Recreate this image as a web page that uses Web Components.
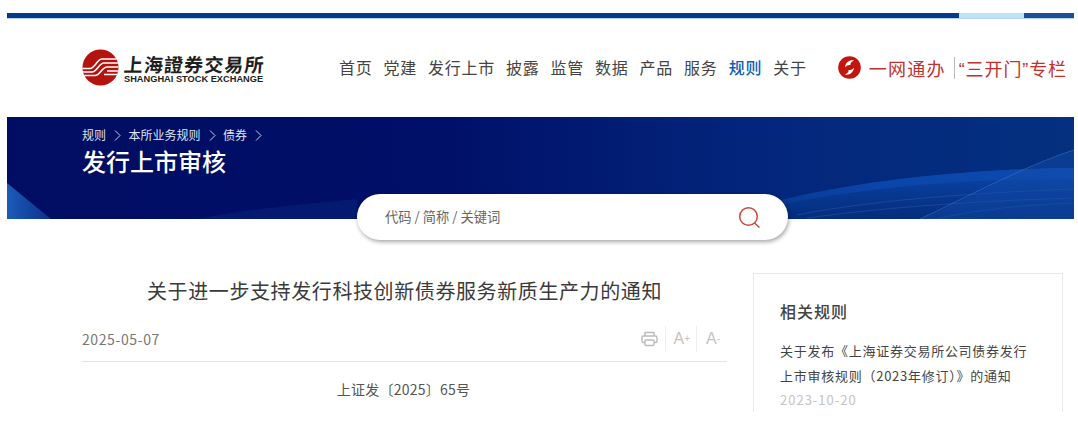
<!DOCTYPE html>
<html lang="zh"><head><meta charset="utf-8"><title>发行上市审核</title>
<style>
html,body{margin:0;padding:0;background:#fff;overflow:hidden}
body{width:1078px;height:442px;font-family:"Noto Sans CJK SC","Liberation Sans",sans-serif;color:#333}
</style></head><body>
<sse-page>
  <sse-header></sse-header>
  <sse-banner crumbs="规则,本所业务规则,债券" heading="发行上市审核"></sse-banner>
  <sse-search placeholder="代码 / 简称 / 关键词"></sse-search>
  <sse-content>
    <sse-article heading="关于进一步支持发行科技创新债券服务新质生产力的通知" date="2025-05-07" doc="上证发〔2025〕65号"></sse-article>
    <sse-side heading="相关规则" date="2023-10-20">关于发布《上海证券交易所公司债券发行<br>上市审核规则（2023年修订）》的通知</sse-side>
  </sse-content>
</sse-page>
<script>
const def=(n,html,init)=>customElements.define(n,class extends HTMLElement{
  constructor(){super();this.attachShadow({mode:'open'}).innerHTML=html}
  connectedCallback(){init&&init(this,this.shadowRoot)}
});
def('sse-page',`<style>:host{display:block;padding:13px 4px 0 7px;height:429px;overflow:hidden}</style><slot></slot>`);
def('sse-header',`<style>
:host{display:block}
.bar{display:flex;height:5px;background:#053a8c;box-shadow:0 1px 0 #b9d3ee}
.bar i:nth-child(1){flex:1}.bar i:nth-child(2){width:65px;background:#bde3fb}.bar i:nth-child(3){width:50px;background:#1d4f98}
.row{display:flex;align-items:center;height:99px;padding:0 7px 0 75px}
.logo{display:flex;flex:none;align-items:center;gap:5px;width:182px;margin-right:75px}
.logo svg{flex:none}
.txt{padding-top:3px}
.cn{font:700 19px/20px "Noto Sans CJK SC",sans-serif;color:#1f1f1f;letter-spacing:1.1px;white-space:nowrap;transform:skewX(-5deg)}
.en{font:700 9.25px/10px "Liberation Sans",sans-serif;color:#222;white-space:nowrap}
nav{display:flex;gap:11px;font-size:16px;letter-spacing:.75px;color:#444;line-height:24px;white-space:nowrap;margin-top:-2px}
nav b{font-weight:500;color:#0f5fb5}
.right{display:flex;align-items:center;margin-left:auto;color:#c0312f;font-size:18px;white-space:nowrap}
.right svg{flex:none;margin-right:8px}
.w{letter-spacing:1.2px}
.sep{width:1px;height:22px;background:#bbb;margin:0 4px 0 8px}
.q{letter-spacing:.9px}
.q u{text-decoration:none;font-family:"Liberation Sans",sans-serif}
</style>
<div class="bar"><i></i><i></i><i></i></div>
<div class="row">
 <div class="logo">
  <svg width="37" height="37" viewBox="0 0 37 37"><defs><clipPath id="c"><circle cx="18.500" cy="18.500" r="18"/></clipPath></defs>
   <circle cx="18.500" cy="18.500" r="18" fill="#b3140f"/>
   <g clip-path="url(#c)" fill="none" stroke="#fff" stroke-width="1.600">
    <path d="M0 19.500H8C13 19.500 15 10 20 10H37"/><path d="M0 23H10C15 23 17 14 22 14H37"/><path d="M0 26.500H13C18 26.500 20 18 25 18H37"/><path d="M22 25.500H37M25 22H37"/>
   </g></svg>
  <div class="txt"><div class="cn">上海證券交易所</div><div class="en">SHANGHAI STOCK EXCHANGE</div></div>
 </div>
 <nav><span>首页</span><span>党建</span><span>发行上市</span><span>披露</span><span>监管</span><span>数据</span><span>产品</span><span>服务</span><b>规则</b><span>关于</span></nav>
 <div class="right">
  <svg width="23" height="23" viewBox="0 0 23 23"><circle cx="11.500" cy="11.500" r="11.300" fill="#c3150e"/>
   <path d="M16 4.500C12 3.500 7.500 6 7 11.500C8.500 9.500 10 8.800 12.500 9C12 7.500 13.500 5.500 16 4.500ZM7 18.500C11 19.500 15.500 17 16 11.500C14.500 13.500 13 14.200 10.500 14C11 15.500 9.500 17.500 7 18.500Z" fill="#fff"/>
   <circle cx="11.500" cy="11.500" r="1.600" fill="#c3150e"/></svg>
  <span class="w">一网通办</span><i class="sep"></i><span class="q"><u>“</u>三开门<u>”</u>专栏</span>
 </div>
</div>`);
def('sse-banner',`<style>
:host{display:block;position:relative;height:102px;background:linear-gradient(90deg,#000d62 0%,#000f68 40%,#03267c 70%,#04307f 100%);overflow:hidden;color:#fff}
svg.bg{position:absolute;left:0;top:0}
.in{position:relative;padding:9px 0 0 75px}
.c{display:flex;align-items:center;font-size:12px;line-height:18px;color:#dfe4f0;white-space:nowrap}
.c i{display:flex;width:22.500px;justify-content:center;padding-left:1px;box-sizing:border-box}
h1{margin:0;font-size:24px;line-height:34px;font-weight:500;color:#fff}
</style>
<svg class="bg" width="1067" height="102" viewBox="0 0 1067 102">
 <defs><linearGradient id="w" x1="0" x2="1"><stop offset="0" stop-color="#0a46aa" stop-opacity=".3"/><stop offset=".4" stop-color="#0b46ab"/><stop offset="1" stop-color="#0c4aae"/></linearGradient>
 <linearGradient id="b" x1="0" y1="0" x2="0" y2="1"><stop offset="0" stop-color="#0c48ad"/><stop offset="1" stop-color="#05307f" stop-opacity=".6"/></linearGradient>
 <linearGradient id="l" x1="0" x2="1"><stop offset="0" stop-color="#1b5cb8"/><stop offset="1" stop-color="#0b2f8a"/></linearGradient></defs>
 <path d="M0 66L44 102H0Z" fill="url(#l)"/>
 <path d="M190 102C240 92 290 88 350 82V102Z" fill="#0a2a80" opacity=".4"/>
 <path d="M770 84C850 64 960 52 1067 51V102H770Z" fill="url(#b)"/>
 <path d="M770 84C850 64 960 52 1067 51V62C960 60 850 72 770 88Z" fill="url(#w)"/>
 <g fill="none" stroke="#3a6fc2" stroke-width=".6" opacity=".55"><path d="M790 98C860 84 960 76 1067 72"/><path d="M800 101C880 90 970 84 1067 81"/><path d="M930 102C970 92 1020 88 1067 86"/></g>
 <path d="M913 102C950 88 1020 48 1067 33V102Z" fill="#1450ac" opacity=".4"/>
 <path d="M913 102C960 80 1020 48 1067 33" fill="none" stroke="#3f78c8" stroke-width=".8" opacity=".7"/>
</svg>
<div class="in"><div class="c" id="c"></div><h1 id="h"></h1></div>`,(e,s)=>{
 s.getElementById('h').textContent=e.getAttribute('heading');
 s.getElementById('c').innerHTML=e.getAttribute('crumbs').split(',').map(t=>`<span>${t}</span><i><svg width="7" height="11" viewBox="0 0 7 11" fill="none" stroke="#c9cfe2" stroke-width="1"><path d="M1 .5L6 5.500L1 10.500"/></svg></i>`).join('');
});
def('sse-search',`<style>
:host{display:block;height:0;position:relative;z-index:1;padding-left:350px}
.b{display:flex;align-items:center;justify-content:space-between;box-sizing:border-box;width:431px;height:46px;margin-top:-25px;padding:0 27px 2px 28px;background:#fff;border-radius:23px;box-shadow:1px 2px 4px rgba(0,0,0,.35);font-size:13.300px;color:#666}
svg{margin-top:2px}
</style><div class="b"><span id="p"></span>
<svg width="23" height="23" viewBox="0 0 23 23" fill="none" stroke="#c8483c" stroke-width="1.500"><circle cx="10.500" cy="10.500" r="8.800"/><path d="M16.500 17L21.500 21.500"/></svg></div>`,(e,s)=>{s.getElementById('p').textContent=e.getAttribute('placeholder')});
def('sse-content',`<style>:host{display:block;height:139px;margin-top:79px;padding:0 12px 0 75px;overflow:hidden}
.g{display:grid;grid-template-columns:645px 310px;column-gap:26px}</style><div class="g"><slot></slot></div>`);
def('sse-article',`<style>
:host{display:block;color:#333}
h2{margin:0;padding-top:1px;font-size:20px;line-height:34px;font-weight:400;letter-spacing:.6px;text-align:center;color:#3a3a3a;white-space:nowrap}
.m{display:flex;align-items:center;justify-content:space-between;height:31px;margin-top:15px;padding-bottom:7px;border-bottom:1px solid #e4e4e4}
.d{font:14px "Noto Sans CJK SC",sans-serif;color:#777;letter-spacing:.6px}
.t{display:flex;align-items:center;color:#c4c4c4;font-family:"Liberation Sans",sans-serif;padding-right:7px}
.t span{display:flex;align-items:center;justify-content:center;height:26px;font-size:16px}
.t span+span{border-left:1px solid #eee;margin-left:7px;padding-left:7px}
.t span+span+span{margin-left:6px;padding-left:9px}
.n{margin-top:17px;text-align:center;font-size:14px;line-height:20px;letter-spacing:.25px;color:#555;padding-right:2px}
</style><h2 id="h"></h2>
<div class="m"><span class="d" id="d"></span><div class="t">
<span><svg width="17" height="16" viewBox="0 0 17 16" fill="none" stroke="#bbb" stroke-width="1.400"><path d="M4 5V1.500H13V5M4 11.500H2.500C1.500 11.500 1 11 1 10V6.500C1 5.500 1.500 5 2.500 5H14.500C15.500 5 16 5.500 16 6.500V10C16 11 15.500 11.500 14.500 11.500H13"/><rect x="4" y="9" width="9" height="5.500" rx="1"/></svg></span>
<span>A<small style="font-size:10px">+</small></span><span>A<small style="font-size:10px">-</small></span></div></div>
<div class="n" id="n"></div>`,(e,s)=>{['h:heading','d:date','n:doc'].forEach(k=>{const[a,b]=k.split(':');s.getElementById(a).textContent=e.getAttribute(b)})});
def('sse-side',`<style>
:host{display:block;box-sizing:border-box;height:180px;border:1px solid #e8e8e8;padding:24px 26px 0}
h3{margin:0 0 14px;font-size:16px;line-height:26px;font-weight:500;letter-spacing:1px;color:#444}
p{margin:0;font-size:13px;line-height:25px;letter-spacing:.74px;color:#444;white-space:nowrap}
.d{font-size:13px;line-height:24px;color:#c4c4c4;letter-spacing:1px}
</style><h3 id="h"></h3><p><slot></slot></p><div class="d" id="d"></div>`,(e,s)=>{s.getElementById('h').textContent=e.getAttribute('heading');s.getElementById('d').textContent=e.getAttribute('date')});
</script>
</body></html>
